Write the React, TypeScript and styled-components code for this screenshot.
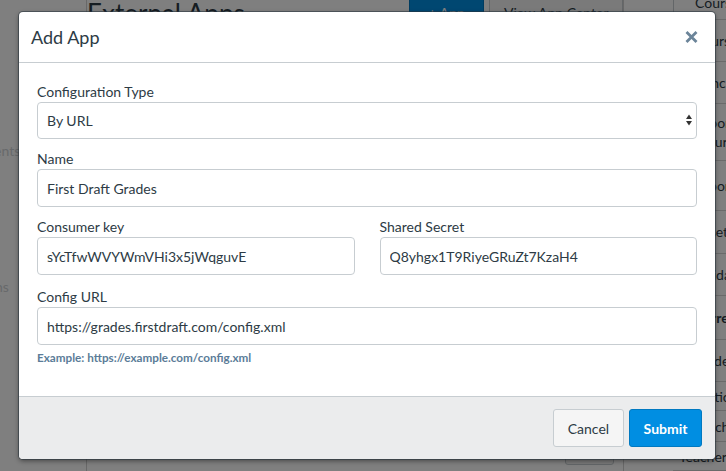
import React from "react";
import styled, { createGlobalStyle } from "styled-components";

const GlobalStyle = createGlobalStyle`
  html, body { margin: 0; padding: 0; }
  body {
    font-family: Lato, "Open Sans", "Liberation Sans", sans-serif;
    color: #2d3b45;
    background: #ffffff;
    overflow: hidden;
  }
  * { box-sizing: border-box; }
`;

/* ---------- background page ---------- */

const Viewport = styled.div`
  position: relative;
  width: 726px;
  height: 471px;
  overflow: hidden;
`;

const Page = styled.div`
  display: grid;
  grid-template-columns: 87px 536px 1fr;
  height: 485px;
  margin-top: -14px;
  background: #fff;
`;

const LeftNav = styled.nav`
  border-right: 1px solid #d0d0d0;
  overflow: hidden;
`;

const NavList = styled.ul`
  list-style: none;
  margin: 0 0 0 -80px;
  padding: 12px 0 0;
  display: flex;
  flex-direction: column;
`;

const NavItem = styled.li`
  height: 34px;
  line-height: 34px;
  font-size: 14px;
  white-space: nowrap;
  color: #cfd3d6;
`;

const Main = styled.main`
  display: flex;
  flex-direction: column;
`;

const HeaderRow = styled.div`
  display: flex;
  align-items: flex-start;
  padding-top: 9px;
`;

const Heading = styled.h1`
  flex: 1;
  margin: 0;
  font-size: 26px;
  line-height: 36px;
  font-weight: 400;
  color: #2d3b45;
`;

const HeaderButtons = styled.div`
  display: flex;
  gap: 5px;
  margin-top: -9px;
`;

const PageButton = styled.div<{ $primary?: boolean; $w: number }>`
  width: ${(p) => p.$w}px;
  height: 52px;
  display: flex;
  align-items: center;
  justify-content: ${(p) => (p.$primary ? "center" : "flex-start")};
  padding: 0 14px;
  font-size: 14px;
  border-radius: 3px;
  background: ${(p) => (p.$primary ? "#008ee2" : "#f5f5f5")};
  color: ${(p) => (p.$primary ? "#fff" : "#2d3b45")};
  border: 1px solid ${(p) => (p.$primary ? "#0079c1" : "#c7cdd1")};
  white-space: nowrap;
  overflow: hidden;
`;

const MainBottom = styled.div`
  margin-top: auto;
  display: flex;
  justify-content: flex-end;
  padding: 0 9px 6px 0;
`;

const SmallButton = styled.div`
  width: 49px;
  height: 34px;
  border: 1px solid #c7cdd1;
  border-radius: 3px;
  background: #f5f5f5;
`;

const Sidebar = styled.aside`
  border-left: 1px solid #d0d0d0;
  padding-left: 49px;
  display: flex;
  flex-direction: column;
  overflow: hidden;
`;

const SideRow = styled.div<{ $h: number; $bold?: boolean; $pad?: number; $edge?: boolean }>`
  height: ${(p) => p.$h}px;
  display: flex;
  align-items: center;
  gap: 5px;
  padding-left: ${(p) => p.$pad ?? 16}px;
  border-bottom: 1px solid #d5d5d5;
  border-left: ${(p) => (p.$edge ? "1px solid #c7cdd1" : "0")};
  font-size: 14px;
  line-height: 19px;
  font-weight: ${(p) => (p.$bold ? 700 : 400)};
  color: #2d3b45;
  white-space: nowrap;
`;

const SideText = styled.span`
  display: block;
  white-space: pre;
`;

const Overlay = styled.div`
  position: absolute;
  inset: 0;
  background: rgba(0, 0, 0, 0.5);
  display: flex;
  align-items: flex-start;
  padding: 12px 11px 0 19px;
`;

/* ---------- modal ---------- */

const Modal = styled.div`
  width: 696px;
  background: #fff;
  border-radius: 4px;
  overflow: hidden;
  box-shadow: 0 0 0 1px rgba(40, 52, 62, 0.55), 0 2px 5px rgba(0, 0, 0, 0.45);
`;

const ModalHeader = styled.header`
  height: 51px;
  display: flex;
  align-items: center;
  justify-content: space-between;
  padding: 0 17px 0 12px;
  border-bottom: 1px solid #c7cdd1;
`;

const ModalTitle = styled.h2`
  margin: 0;
  font-size: 18px;
  font-weight: 400;
  color: #2d3b45;
  line-height: 24px;
`;

const CloseButton = styled.button`
  border: 0;
  background: none;
  padding: 0;
  display: flex;
  color: #6b8499;
  cursor: pointer;
`;

const ModalBody = styled.div`
  padding: 19px 18px 31px;
  display: flex;
  flex-direction: column;
`;

const FieldRow = styled.div<{ $mb: number }>`
  display: grid;
  grid-template-columns: 1fr 1fr;
  column-gap: 25px;
  margin-bottom: ${(p) => p.$mb}px;
`;

const Field = styled.div<{ $mb?: number }>`
  display: flex;
  flex-direction: column;
  margin-bottom: ${(p) => p.$mb ?? 0}px;
`;

const Label = styled.label`
  font-size: 14px;
  line-height: 20px;
  color: #2d3b45;
`;

const Input = styled.input`
  height: 38px;
  width: 100%;
  border: 1px solid #c7cdd1;
  border-radius: 4px;
  padding: 0 9px;
  font-family: Lato, "Open Sans", "Liberation Sans", sans-serif;
  font-size: 14px;
  color: #2d3b45;
  background: #fff;
  outline: none;
`;

const SelectWrap = styled.div`
  position: relative;
`;

const Select = styled.select`
  appearance: none;
  -webkit-appearance: none;
  height: 37px;
  width: 100%;
  border: 1px solid #c7cdd1;
  border-radius: 4px;
  padding: 0 9px;
  font-family: Lato, "Open Sans", "Liberation Sans", sans-serif;
  font-size: 14px;
  color: #2d3b45;
  background: #fff;
  outline: none;
`;

const SelectArrows = styled.svg`
  position: absolute;
  right: 5px;
  top: 12px;
  pointer-events: none;
`;

const Hint = styled.div`
  margin-top: 4px;
  font-size: 11.7px;
  line-height: 16px;
  font-weight: 700;
  color: #5b7c98;
`;

const ModalFooter = styled.footer`
  display: flex;
  justify-content: flex-end;
  gap: 5px;
  padding: 12px 13px;
  background: #ebeced;
  border-top: 1px solid #c7cdd1;
`;

const Button = styled.button<{ $primary?: boolean }>`
  height: 38px;
  padding: 0 ${(p) => (p.$primary ? 13.5 : 14)}px;
  border-radius: 3px;
  font-family: Lato, "Open Sans", "Liberation Sans", sans-serif;
  font-size: 14px;
  font-weight: ${(p) => (p.$primary ? 700 : 400)};
  background: ${(p) => (p.$primary ? "#008ee2" : "#f5f5f5")};
  color: ${(p) => (p.$primary ? "#ffffff" : "#2d3b45")};
  border: 1px solid ${(p) => (p.$primary ? "#0079c1" : "#c7cdd1")};
  cursor: pointer;
`;

const BarsIcon = () => (
  <svg width="10" height="12" viewBox="0 0 10 12" fill="#2d3b45">
    <rect x="0" y="8" width="2" height="4" />
    <rect x="3" y="5" width="2" height="7" />
    <rect x="6" y="1" width="2.5" height="11" />
  </svg>
);

const BoxIcon = () => (
  <svg width="12" height="12" viewBox="0 0 12 12" fill="none" stroke="#2d3b45" strokeWidth="1.4">
    <rect x="1" y="1.5" width="10" height="9.5" rx="1" />
  </svg>
);

const navItems = [
  "Home",
  "Pages",
  "Files",
  "Grades",
  "Announcements",
  "People",
  "Syllabus",
  "Quizzes",
  "Collaborations",
  "Modules",
  "Outcomes",
  "Settings",
];

const sideRows: {
  t: string;
  h: number;
  icon?: "bars" | "box";
  bold?: boolean;
  pad?: number;
  edge?: boolean;
}[] = [
  { t: "Course Statistics", h: 35, icon: "bars", edge: true },
  { t: "Course Calendar", h: 44, icon: "box" },
  { t: "Conclude this Course", h: 43, icon: "box" },
  { t: "Import Content\n Course", h: 60, icon: "box" },
  { t: "Export Course Content", h: 51, icon: "box" },
  { t: "Reset Course Content", h: 45, icon: "box" },
  { t: "Validate Links in Content", h: 44, icon: "box" },
  { t: "Current Users", h: 45, icon: "box", bold: true },
  { t: "Students: 24", h: 44, icon: "box" },
  { t: "Participants", h: 30, icon: "box" },
  { t: "Teachers: 1", h: 32, icon: "box" },
  { t: "Teacher", h: 30, pad: 6 },
];

export default function App() {
  return (
    <>
      <GlobalStyle />
      <Viewport>
        <Page>
          <LeftNav>
            <NavList>
              {navItems.map((n) => (
                <NavItem key={n}>{n}</NavItem>
              ))}
            </NavList>
          </LeftNav>
          <Main>
            <HeaderRow>
              <Heading>External Apps</Heading>
              <HeaderButtons>
                <PageButton $primary $w={75}>+ App</PageButton>
                <PageButton $w={134}>View App Center</PageButton>
              </HeaderButtons>
            </HeaderRow>
            <MainBottom>
              <SmallButton />
            </MainBottom>
          </Main>
          <Sidebar>
            {sideRows.map((r) => (
              <SideRow key={r.t} $h={r.h} $bold={r.bold} $pad={r.pad} $edge={r.edge}>
                {r.icon === "bars" && <BarsIcon />}
                {r.icon === "box" && <BoxIcon />}
                <SideText>{r.t}</SideText>
              </SideRow>
            ))}
          </Sidebar>
        </Page>

        <Overlay>
          <Modal role="dialog" aria-label="Add App">
            <ModalHeader>
              <ModalTitle>Add App</ModalTitle>
              <CloseButton aria-label="Close">
                <svg width="13" height="12" viewBox="0 0 13 12">
                  <path
                    d="M1.5 1 L11.5 11 M11.5 1 L1.5 11"
                    stroke="currentColor"
                    strokeWidth="2.8"
                    strokeLinecap="butt"
                  />
                </svg>
              </CloseButton>
            </ModalHeader>
            <ModalBody>
              <Field $mb={10}>
                <Label>Configuration Type</Label>
                <SelectWrap>
                  <Select defaultValue="url">
                    <option value="url">By URL</option>
                  </Select>
                  <SelectArrows width="6" height="12" viewBox="0 0 6 12" fill="#333">
                    <path d="M0 5 L3 0.5 L6 5 Z" />
                    <path d="M0 7 L3 11.5 L6 7 Z" />
                  </SelectArrows>
                </SelectWrap>
              </Field>
              <Field $mb={10}>
                <Label>Name</Label>
                <Input defaultValue="First Draft Grades" />
              </Field>
              <FieldRow $mb={12}>
                <Field>
                  <Label>Consumer key</Label>
                  <Input defaultValue="sYcTfwWVYWmVHi3x5jWqguvE" />
                </Field>
                <Field>
                  <Label>Shared Secret</Label>
                  <Input defaultValue="Q8yhgx1T9RiyeGRuZt7KzaH4" />
                </Field>
              </FieldRow>
              <Field>
                <Label>Config URL</Label>
                <Input defaultValue="https://grades.firstdraft.com/config.xml" />
                <Hint>Example: https://example.com/config.xml</Hint>
              </Field>
            </ModalBody>
            <ModalFooter>
              <Button>Cancel</Button>
              <Button $primary>Submit</Button>
            </ModalFooter>
          </Modal>
        </Overlay>
      </Viewport>
    </>
  );
}
